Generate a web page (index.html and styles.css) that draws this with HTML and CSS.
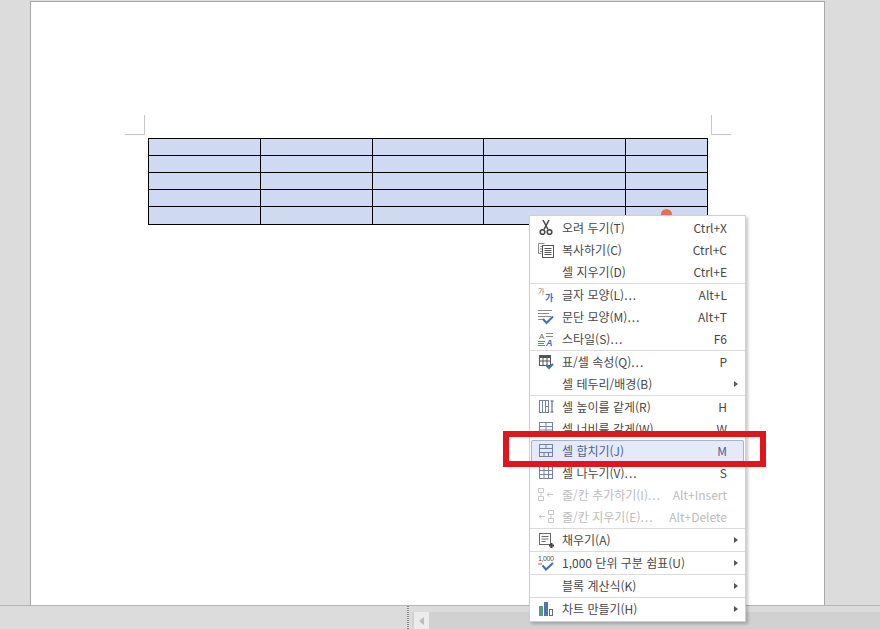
FILE: index.html
```html
<!DOCTYPE html>
<html lang="ko">
<head>
<meta charset="utf-8">
<title>셀 합치기</title>
<link rel="stylesheet" href="styles.css">
</head>
<body>
<div class="app">
  <div class="workspace">
    <div class="page">
      <div class="crops"><span class="crop crop-l"></span><span class="crop crop-r"></span></div>
      <table class="sheet">
        <colgroup><col class="c1"><col class="c2"><col class="c3"><col class="c4"><col class="c5"></colgroup>
        <tr><td></td><td></td><td></td><td></td><td></td></tr>
        <tr><td></td><td></td><td></td><td></td><td></td></tr>
        <tr><td></td><td></td><td></td><td></td><td></td></tr>
        <tr><td></td><td></td><td></td><td></td><td></td></tr>
        <tr class="last"><td></td><td></td><td></td><td></td><td></td></tr>
      </table>
    </div>
  </div>
  <div class="statusbar">
    <div class="status-left"></div>
    <div class="grip"></div>
    <div class="hscroll">
      <div class="hscroll-top"></div>
      <div class="hscroll-track"><span class="hscroll-btn"><i class="tri"></i></span></div>
    </div>
  </div>

  <span class="dot"></span>

  <div class="menu">
    <div class="item"><svg class="ico" viewBox="0 0 16 16"><path class="cut" d="M5 0l5 9.500M11 0L6 9.500"/><circle class="cut" cx="4.500" cy="12" r="2.300"/><circle class="cut" cx="11.500" cy="12" r="2.300"/></svg><span class="lb">오려 두기(T)</span><span class="sc">Ctrl+X</span><span class="ar"></span></div>
    <div class="item"><svg class="ico" viewBox="0 0 16 16"><path class="g" d="M6.500 1.500H.5v10h3"/><path class="g" d="M2 4.500h2M2 7h2M2 9.500h2"/><rect class="k fw" x="4.500" y="3.500" width="11" height="12"/><path class="k" d="M6.500 6.500h7M6.500 8.500h7M6.500 10.500h7M6.500 12.500h7"/></svg><span class="lb">복사하기(C)</span><span class="sc">Ctrl+C</span><span class="ar"></span></div>
    <div class="item"><span class="ico"></span><span class="lb">셀 지우기(D)</span><span class="sc">Ctrl+E</span><span class="ar"></span></div>
    <div class="sep"></div>
    <div class="item"><svg class="ico" viewBox="0 0 16 16"><text class="gl gl-a" x="0" y="7">가</text><text class="gl gl-b" x="7" y="14">가</text></svg><span class="lb">글자 모양(L)<span class="dots">...</span></span><span class="sc">Alt+L</span><span class="ar"></span></div>
    <div class="item"><svg class="ico" viewBox="0 0 16 16"><path class="g" d="M0 1.500h14M0 4.500h11M0 7.500h13M0 10.500h6"/><path class="b2" d="M5 10l3.500 4L15 7.500"/></svg><span class="lb">문단 모양(M)<span class="dots">...</span></span><span class="sc">Alt+T</span><span class="ar"></span></div>
    <div class="item"><svg class="ico" viewBox="0 0 16 16"><text class="gl gl-c" x="1" y="8">A</text><path class="g" d="M8 2.500h7M8 5.500h7"/><path class="b1" d="M0 10.500h7M0 12.500h6M0 14.500h7"/><text class="gl gl-d" x="8" y="15">A</text></svg><span class="lb">스타일(S)<span class="dots">...</span></span><span class="sc">F6</span><span class="ar"></span></div>
    <div class="sep"></div>
    <div class="item"><svg class="ico" viewBox="0 0 16 16"><rect class="fd" x="1" y="1" width="12" height="3"/><rect class="k" x="1.500" y="1.500" width="11" height="10"/><path class="k" d="M1.500 7h11M5 1.500v10M9 1.500v10"/><path class="b2" d="M8 11l3 3 4-4"/></svg><span class="lb">표/셀 속성(Q)<span class="dots">...</span></span><span class="sc">P</span><span class="ar"></span></div>
    <div class="item"><span class="ico"></span><span class="lb">셀 테두리/배경(B)</span><span class="sc"></span><span class="ar"><i class="arw"></i></span></div>
    <div class="sep"></div>
    <div class="item"><svg class="ico" viewBox="0 0 16 16"><rect class="s" x="1.500" y="1.500" width="9" height="12"/><path class="s" d="M4.500 1.500v12M7.500 1.500v12M7.500 7.500h3"/><path class="k" d="M12.500 2h3M14 2v11M12.500 13h3"/></svg><span class="lb">셀 높이를 같게(R)</span><span class="sc">H</span><span class="ar"></span></div>
    <div class="item"><svg class="ico" viewBox="0 0 16 16"><rect class="s" x="1.500" y="1.500" width="13" height="11"/><path class="s" d="M1.500 5.500h13M8 1.500v11M1.500 9h13"/></svg><span class="lb">셀 너비를 같게(W)</span><span class="sc">W</span><span class="ar"></span></div>
    <div class="item on"><svg class="ico" viewBox="0 0 16 16"><rect class="s" x="1.500" y="1.500" width="13" height="12"/><path class="s" d="M1.500 5.500h13M1.500 9.500h13M6 9.500v4M10.500 9.500v4M8 1.500v4"/></svg><span class="lb">셀 합치기(J)</span><span class="sc">M</span><span class="ar"></span></div>
    <div class="item"><svg class="ico" viewBox="0 0 16 16"><rect class="s" x="1.500" y="1.500" width="13" height="12"/><path class="s" d="M1.500 5.500h13M1.500 9.500h13M6 1.500v12M10.500 1.500v12"/></svg><span class="lb">셀 나누기(V)<span class="dots">...</span></span><span class="sc">S</span><span class="ar"></span></div>
    <div class="item off"><svg class="ico" viewBox="0 0 16 16"><path class="d" d="M.5 1.500h5v4h-5zM.5 9.500h5v4h-5zM3 5.500v4M9 7.500h6M9 7.500l2.500-2M9 7.500l2.500 2"/></svg><span class="lb">줄/칸 추가하기(I)<span class="dots">...</span></span><span class="sc">Alt+Insert</span><span class="ar"></span></div>
    <div class="item off"><svg class="ico" viewBox="0 0 16 16"><path class="d" d="M10.500 1.500h5v4h-5zM10.500 9.500h5v4h-5zM13 5.500v4M1 7.500h6M1 7.500l2.500-2M1 7.500l2.500 2"/></svg><span class="lb">줄/칸 지우기(E)<span class="dots">...</span></span><span class="sc">Alt+Delete</span><span class="ar"></span></div>
    <div class="sep"></div>
    <div class="item"><svg class="ico" viewBox="0 0 16 16"><rect class="k2" x="1.500" y="1.500" width="11" height="11"/><path class="k2" d="M3.500 4.500h7M3.500 7h7M3.500 9.500h4"/><path class="pl" d="M11 13.500h5M13.500 11v5"/></svg><span class="lb">채우기(A)</span><span class="sc"></span><span class="ar"><i class="arw"></i></span></div>
    <div class="sep"></div>
    <div class="item"><svg class="ico" viewBox="0 0 16 16"><text class="gl gl-e" x="0" y="6">1,000</text><path class="rd" d="M0 9h4"/><path class="b2" d="M4.500 10.500l3.500 4 7-6.500"/></svg><span class="lb">1,000 단위 구분 쉼표(U)</span><span class="sc"></span><span class="ar"><i class="arw"></i></span></div>
    <div class="sep"></div>
    <div class="item"><span class="ico"></span><span class="lb">블록 계산식(K)</span><span class="sc"></span><span class="ar"><i class="arw"></i></span></div>
    <div class="sep"></div>
    <div class="item"><svg class="ico" viewBox="0 0 16 16"><rect class="fg" x="1" y="5" width="4" height="10"/><rect class="fb" x="6" y="1" width="4" height="14"/><rect class="k2" x="11.500" y="8.500" width="3" height="6"/></svg><span class="lb">차트 만들기(H)</span><span class="sc"></span><span class="ar"><i class="arw"></i></span></div>
  </div>

  <div class="callout"></div>
</div>
</body>
</html>
```
FILE: styles.css
```css
html, body { margin: 0; padding: 0; }
body { font-family: "Noto Sans CJK KR", "Noto Sans", sans-serif; background: #dcdcdc; }

.app { position: relative; width: 880px; height: 629px; overflow: hidden; display: flex; flex-direction: column; background: #dcdcdc; }

.workspace { flex: 1; min-height: 0; padding: 1px 0 0 30px; }
.page { box-sizing: border-box; width: 795px; height: 100%; background: #fff; border: 1px solid #a8a8a8; border-bottom: 0; padding-top: 113px; }

.crops { display: flex; justify-content: space-between; width: 606px; margin-left: 94px; }
.crop { display: block; box-sizing: border-box; width: 20px; height: 20px; border-bottom: 1px solid #c6c6c6; }
.crop-l { border-right: 1px solid #c6c6c6; }
.crop-r { border-left: 1px solid #c6c6c6; }

.sheet { table-layout: fixed; width: 560px; height: 87px; margin: 3px 0 0 117px; border-collapse: separate; border-spacing: 1px; background: #000; }
.sheet td { padding: 0; height: 16px; background: #cfd9f2; }
.sheet .last td { height: 17px; }
.c1, .c2 { width: 111px; }
.c3 { width: 110px; }
.c4 { width: 141px; }
.c5 { width: 81px; }

.statusbar { flex: none; display: flex; height: 24px; box-sizing: border-box; border-top: 1px solid #b4b4b4; background: #dcdcdc; }
.status-left { width: 407px; }
.grip { width: 2px; margin-right: 3px; background-image: repeating-linear-gradient(to bottom, #8c8c8c 0 1px, #dcdcdc 1px 2px); }
.hscroll { flex: 1; display: flex; flex-direction: column; }
.hscroll-top { height: 6px; background: #dcdcdc; }
.hscroll-track { flex: 1; background: #d1d1d1; padding-left: 2px; }
.hscroll-btn { display: flex; align-items: center; justify-content: center; width: 15px; height: 17px; background: #ececec; }
.tri { display: block; width: 0; height: 0; border-style: solid; border-width: 4px 5px 4px 0; border-color: transparent #bcbcbc transparent transparent; }

.dot { position: absolute; left: 661px; top: 209px; width: 11px; height: 11px; border-radius: 50%; background: #e8704f; }

.menu { position: absolute; left: 529px; top: 215px; width: 217px; box-sizing: border-box; height: 407px; padding-top: 1px; background: #fff; border: 1px solid #d0d0d0; box-shadow: 2px 2px 3px rgba(0,0,0,.22); font-size: 12px; color: #484848; }
.item { display: flex; align-items: center; height: 22px; box-sizing: border-box; padding-left: 8px; white-space: nowrap; }
.ico { flex: none; display: block; width: 16px; height: 16px; margin-right: 8px; overflow: visible; }
.lb { flex: 1; line-height: 22px; }
.dots { letter-spacing: 1px; }
.sc { line-height: 22px; }
.ar { flex: none; width: 18px; display: flex; justify-content: flex-end; padding-right: 7px; box-sizing: border-box; }
.arw { display: block; width: 0; height: 0; border-style: solid; border-width: 3px 0 3px 4px; border-color: transparent transparent transparent #555; }
.sep { height: 1px; background: #dcdcdc; }

.item.on { position: relative; z-index: 1; background: #e4eaf8; box-shadow: 0 0 0 1px #a3b3d2 inset; border-radius: 2px; margin: 0 1px; padding-left: 7px; color: #4c6190; }
.item.on .ar { width: 17px; }
.item.off { color: #bcbcbc; }

.ico path, .ico rect, .ico circle { fill: none; }
.ico .fw { fill: #fff; }
.ico .fd { fill: #555; }
.ico .fg { fill: #5a9a84; }
.ico .fb { fill: #4f74b3; }
.cut { stroke: #4a4a4a; stroke-width: 1.6; }
.k { stroke: #555; stroke-width: 1; }
.k2 { stroke: #6a6a6a; stroke-width: 1; }
.g { stroke: #8a8a8a; stroke-width: 1; }
.s { stroke: #6f84a8; stroke-width: 1; }
.d { stroke: #c8c8c8; stroke-width: 1; }
.b1 { stroke: #5f7fb8; stroke-width: 1; }
.b2 { stroke: #3f6fb5; stroke-width: 2; }
.pl { stroke: #444; stroke-width: 2; }
.rd { stroke: #d9503f; stroke-width: 1; }

.gl { font-family: "Noto Sans CJK KR", sans-serif; }
.gl-a { font-size: 7px; fill: #777; }
.gl-b { font-size: 9px; font-weight: 700; fill: #3f6fb5; }
.gl-c { font-size: 8px; fill: #666; font-family: "Liberation Sans", sans-serif; }
.gl-d { font-size: 9px; font-style: italic; font-weight: 700; fill: #3f6fb5; font-family: "Liberation Sans", sans-serif; }
.gl-e { font-size: 7px; letter-spacing: -.4px; fill: #555; font-family: "Liberation Sans", sans-serif; }

.callout { position: absolute; z-index: 2; left: 503px; top: 431px; width: 263px; height: 36px; box-sizing: border-box; border: 6px solid #e0161f; }
```
